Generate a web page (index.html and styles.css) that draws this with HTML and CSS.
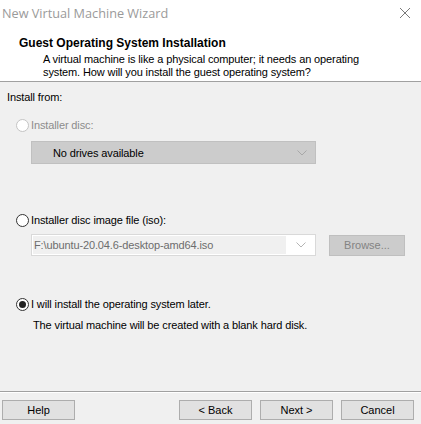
FILE: index.html
```html
<!DOCTYPE html>
<html lang="en">
<head>
    <meta charset="UTF-8">
    <meta name="viewport" content="width=device-width, initial-scale=1.0">
    <title>New Virtual Machine Wizard</title>
    <link rel="stylesheet" href="styles.css">
</head>
<body>
    <div class="window">
        <div class="titlebar">
            <span class="title">New Virtual Machine Wizard</span>
            <svg class="close" width="12" height="12" viewBox="0 0 12 12">
                <path d="M1 1 L11 11 M11 1 L1 11" stroke="#7a7a7a" stroke-width="1" fill="none"/>
            </svg>
        </div>
        <div class="header">
            <h1>Guest Operating System Installation</h1>
            <p>A virtual machine is like a physical computer; it needs an operating<br>system. How will you install the guest operating system?</p>
        </div>

        <div class="content">
            <div class="group-label">Install from:</div>

            <label class="option disabled disc-option"><span class="radio"></span>Installer disc:</label>
            <div class="combo drives">
                <span class="value">No drives available</span>
                <svg class="chevron" width="10" height="6" viewBox="0 0 10 6"><path d="M0.5 0.5 L5 5 L9.5 0.5" stroke="#a8a8a8" fill="none"/></svg>
            </div>

            <label class="option iso-option"><span class="radio"></span>Installer disc image file (iso):</label>
            <div class="iso-row">
                <div class="combo iso">
                    <span class="value">F:\ubuntu-20.04.6-desktop-amd64.iso</span>
                    <svg class="chevron" width="10" height="6" viewBox="0 0 10 6"><path d="M0.5 0.5 L5 5 L9.5 0.5" stroke="#b4b4b4" fill="none"/></svg>
                </div>
                <button class="btn browse" disabled>Browse...</button>
            </div>

            <label class="option checked later-option"><span class="radio"></span>I will install the operating system later.</label>
            <p class="note">The virtual machine will be created with a blank hard disk.</p>
        </div>

        <div class="footer">
            <button class="btn help">Help</button>
            <div class="nav-buttons">
                <button class="btn">&lt; Back</button>
                <button class="btn">Next &gt;</button>
                <button class="btn cancel">Cancel</button>
            </div>
        </div>
    </div>
</body>
</html>
```

FILE: styles.css
```css
* {
    box-sizing: border-box;
}
body {
    margin: 0;
    padding: 0;
    font-family: 'Liberation Sans', Arial, sans-serif;
    font-size: 11px;
    letter-spacing: -0.12px;
    color: #000;
    background-color: #f0f0f0;
}
.window {
    width: 421px;
    height: 424px;
    display: flex;
    flex-direction: column;
    background-color: #f0f0f0;
    overflow: hidden;
}

/* title bar + white header */
.titlebar {
    height: 30px;
    background-color: #fff;
    display: flex;
    align-items: center;
    justify-content: space-between;
    padding: 0 10px 4px 2px;
}
.title {
    font-family: 'Open Sans', sans-serif;
    font-size: 12.7px;
    letter-spacing: 0;
    color: #9a9a9a;
}
.close {
    display: block;
}
.header {
    height: 52px;
    background-color: #fff;
    border-bottom: 1px solid #a0a0a0;
    padding: 7px 0 0 19px;
}
.header h1 {
    margin: 0;
    font-size: 12px;
    font-weight: bold;
    letter-spacing: 0;
    line-height: 13px;
}
.header p {
    margin: 3px 0 0 24px;
    line-height: 13px;
}

/* options */
.content {
    flex: 1;
    padding: 8px 0 0 7px;
    border-bottom: 1px solid #a0a0a0;
}
.group-label {
    line-height: 14px;
}
.option {
    display: flex;
    align-items: center;
    height: 14px;
    margin-left: 9px;
}
.option.disabled {
    color: #8c8c8c;
}
.radio {
    width: 13px;
    height: 13px;
    border: 1px solid #333;
    border-radius: 50%;
    background-color: #fff;
    margin-right: 2px;
    display: flex;
    align-items: center;
    justify-content: center;
}
.disabled .radio {
    border-color: #c4c4c4;
}
.checked .radio::after {
    content: '';
    width: 7px;
    height: 7px;
    border-radius: 50%;
    background-color: #222;
}
.disc-option {
    margin-top: 14px;
}
.iso-option {
    margin-top: 49px;
}
.later-option {
    margin-top: 41px;
}
.note {
    margin: 7px 0 0 26px;
    line-height: 14px;
}

.combo {
    display: flex;
    align-items: center;
    justify-content: space-between;
    margin-left: 24px;
    width: 285px;
}
.drives {
    margin-top: 9px;
    height: 23px;
    background-color: #cccccc;
    border: 1px solid #c0c0c0;
    padding: 0 8px 0 21px;
}
.iso-row {
    display: flex;
    align-items: center;
    margin-top: 7px;
}
.iso {
    height: 22px;
    background-color: #fff;
    border: 1px solid #d9d9d9;
    padding: 1px 9px 1px 1px;
}
.iso .value {
    flex: 1;
    align-self: stretch;
    display: flex;
    align-items: center;
    padding-left: 1px;
    margin-right: 10px;
    background-color: #f0f0f0;
    color: #6d6d6d;
}
.chevron {
    display: block;
}

/* buttons */
.btn {
    font-family: 'Liberation Sans', Arial, sans-serif;
    font-size: 11px;
    color: #000;
    height: 20px;
    width: 73px;
    background-color: #e1e1e1;
    border: 1px solid #adadad;
    padding: 0;
}
.browse {
    margin-left: 13px;
    width: 76px;
    height: 21px;
    background-color: #cccccc;
    border-color: #bfbfbf;
    color: #838383;
}
.footer {
    height: 32px;
    border-top: 1px solid #fff;
    display: flex;
    justify-content: space-between;
    padding: 7px 7px 0 2px;
}
.nav-buttons {
    display: flex;
    gap: 8px;
}
```
